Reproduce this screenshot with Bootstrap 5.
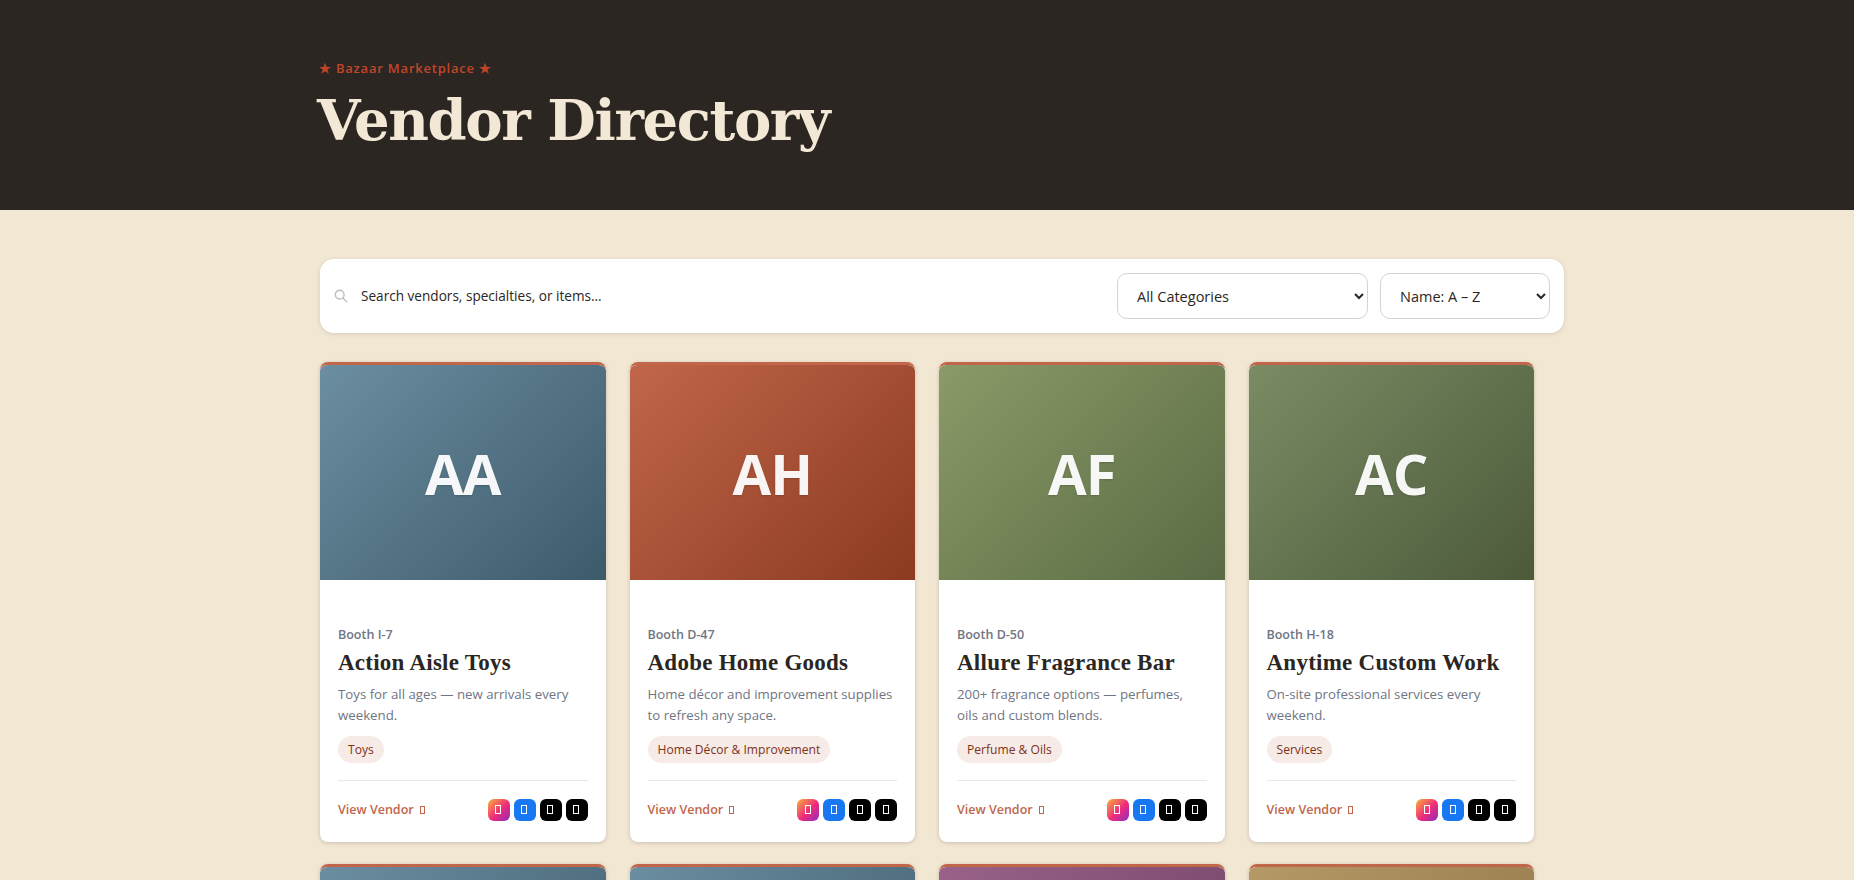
<!DOCTYPE html>
<html lang="en">
<head>
<meta charset="utf-8">
<title>Vendor Directory</title>
<link href="https://cdn.jsdelivr.net/npm/bootstrap@5.3.0/dist/css/bootstrap.min.css" rel="stylesheet">
<style>
body{background:#f1e7d3;font-family:"Open Sans","Noto Sans",sans-serif;color:#2c2622;overflow-x:hidden}
.hero-band{background:#2c2622;height:210px;padding:58px 0 0 319px}
.hero-kicker{color:#c1452b;font-size:13px;font-weight:600;letter-spacing:.78px;line-height:20px;margin-bottom:8px}
.hero-title{font-family:"DejaVu Serif",serif;font-weight:700;font-size:56px;letter-spacing:-1.4px;line-height:68px;color:#f2e8d5;margin:0 0 0 -2px}
.page-wrap{width:1214px;margin:0 auto;padding-top:49px}
.search-panel{width:1244px;height:74px;background:#fff;border-radius:14px;box-shadow:0 1px 4px rgba(44,38,34,.14);padding:0 14px;margin-bottom:29px}
.search-glass{width:14px;height:14px;flex:none}
.search-text{font-size:13.6px;color:#2c2622;margin-left:13px}
.search-select{height:46px;border-radius:10px;border-color:#d3d3dc;font-size:14.5px;color:#2c2622;padding-left:15px;appearance:auto;-webkit-appearance:auto;background-image:none}
.select-cat{width:251px}
.select-sort{width:170px}
.vendor-grid{display:grid;grid-template-columns:repeat(4,1fr);column-gap:24px;row-gap:22px}
.vendor-card{background:#fff;border-top:3px solid #c1664a;border-radius:8px;box-shadow:0 1px 4px rgba(44,38,34,.2);overflow:hidden;height:480px}
.vendor-thumb{height:215px;display:flex;align-items:center;justify-content:center;font-size:56px;font-weight:700;color:rgba(255,255,255,.95);text-shadow:0 1px 2px rgba(0,0,0,.15);border-radius:6px 6px 0 0;letter-spacing:-1px}
.tone-blue{background:linear-gradient(135deg,#6b8ea0,#3d5a6b)}
.tone-rust{background:linear-gradient(135deg,#c1664a,#8b3a20)}
.tone-sage{background:linear-gradient(135deg,#8a9a68,#5a6b44)}
.tone-moss{background:linear-gradient(135deg,#7a8c64,#4c5a3a)}
.tone-plum{background:linear-gradient(135deg,#9a6288,#6d3f60)}
.tone-sand{background:linear-gradient(135deg,#b59966,#8f7245)}
.vendor-body{padding:47px 18px 0}
.booth-label{font-size:12.5px;font-weight:600;color:#6f7583;line-height:16px}
.vendor-name{font-family:"Liberation Serif",serif;font-weight:700;font-size:23px;letter-spacing:.25px;line-height:28px;margin:6px 0 7px;color:#2c2622}
.vendor-desc{font-size:13.25px;line-height:21px;color:#6f7583;margin:0 0 10px;height:42px}
.vendor-tag{display:inline-block;background:#f6ebe7;color:#7d3218;font-size:12.1px;font-weight:500;line-height:27px;padding:0 10px;border-radius:14px}
.vendor-foot{border-top:1px solid #e7e7ec;margin-top:17px;padding-top:18px}
.view-link{color:#c1664a;font-size:12.5px;font-weight:600;text-decoration:none}
.tofu-mark{display:inline-block;width:5px;height:8px;border:1px solid currentColor;margin-left:3px}
.social-tile{width:22px;height:22px;border-radius:6px;color:#fff;display:flex;align-items:center;justify-content:center}
.social-tile .tofu-mark{margin:0 1px 2px 0;width:6px;height:9px}
.tile-ig{background:linear-gradient(135deg,#f8b13a,#ee2a7b 55%,#8a2dc2)}
.tile-fb{background:#1877f2}
.tile-dark{background:#000}
</style>
</head>
<body>
<header class="hero-band">
  <div class="hero-kicker">★ Bazaar Marketplace ★</div>
  <h1 class="hero-title">Vendor Directory</h1>
</header>
<main class="page-wrap">
  <div class="search-panel d-flex align-items-center">
    <svg class="search-glass" viewBox="0 0 16 16" fill="none" stroke="#bdbdbd" stroke-width="1.6"><circle cx="6.5" cy="6.5" r="5"/><path d="M10.2 10.2 15 15"/></svg>
    <span class="search-text flex-grow-1">Search vendors, specialties, or items...</span>
    <select class="form-select search-select select-cat me-2"><option>All Categories</option></select>
    <select class="form-select search-select select-sort ms-1"><option>Name: A – Z</option></select>
  </div>
  <div class="vendor-grid">
    <article class="vendor-card">
      <div class="vendor-thumb tone-blue">AA</div>
      <div class="vendor-body">
        <div class="booth-label">Booth I-7</div>
        <h2 class="vendor-name">Action Aisle Toys</h2>
        <p class="vendor-desc">Toys for all ages — new arrivals every weekend.</p>
        <span class="vendor-tag">Toys</span>
        <div class="vendor-foot d-flex justify-content-between align-items-center">
          <a class="view-link" href="#">View Vendor <span class="tofu-mark"></span></a>
          <div class="d-flex gap-1"><span class="social-tile tile-ig"><span class="tofu-mark"></span></span><span class="social-tile tile-fb"><span class="tofu-mark"></span></span><span class="social-tile tile-dark"><span class="tofu-mark"></span></span><span class="social-tile tile-dark"><span class="tofu-mark"></span></span></div>
        </div>
      </div>
    </article>
    <article class="vendor-card">
      <div class="vendor-thumb tone-rust">AH</div>
      <div class="vendor-body">
        <div class="booth-label">Booth D-47</div>
        <h2 class="vendor-name">Adobe Home Goods</h2>
        <p class="vendor-desc">Home décor and improvement supplies to refresh any space.</p>
        <span class="vendor-tag">Home Décor &amp; Improvement</span>
        <div class="vendor-foot d-flex justify-content-between align-items-center">
          <a class="view-link" href="#">View Vendor <span class="tofu-mark"></span></a>
          <div class="d-flex gap-1"><span class="social-tile tile-ig"><span class="tofu-mark"></span></span><span class="social-tile tile-fb"><span class="tofu-mark"></span></span><span class="social-tile tile-dark"><span class="tofu-mark"></span></span><span class="social-tile tile-dark"><span class="tofu-mark"></span></span></div>
        </div>
      </div>
    </article>
    <article class="vendor-card">
      <div class="vendor-thumb tone-sage">AF</div>
      <div class="vendor-body">
        <div class="booth-label">Booth D-50</div>
        <h2 class="vendor-name">Allure Fragrance Bar</h2>
        <p class="vendor-desc">200+ fragrance options — perfumes, oils and custom blends.</p>
        <span class="vendor-tag">Perfume &amp; Oils</span>
        <div class="vendor-foot d-flex justify-content-between align-items-center">
          <a class="view-link" href="#">View Vendor <span class="tofu-mark"></span></a>
          <div class="d-flex gap-1"><span class="social-tile tile-ig"><span class="tofu-mark"></span></span><span class="social-tile tile-fb"><span class="tofu-mark"></span></span><span class="social-tile tile-dark"><span class="tofu-mark"></span></span><span class="social-tile tile-dark"><span class="tofu-mark"></span></span></div>
        </div>
      </div>
    </article>
    <article class="vendor-card">
      <div class="vendor-thumb tone-moss">AC</div>
      <div class="vendor-body">
        <div class="booth-label">Booth H-18</div>
        <h2 class="vendor-name">Anytime Custom Work</h2>
        <p class="vendor-desc">On-site professional services every weekend.</p>
        <span class="vendor-tag">Services</span>
        <div class="vendor-foot d-flex justify-content-between align-items-center">
          <a class="view-link" href="#">View Vendor <span class="tofu-mark"></span></a>
          <div class="d-flex gap-1"><span class="social-tile tile-ig"><span class="tofu-mark"></span></span><span class="social-tile tile-fb"><span class="tofu-mark"></span></span><span class="social-tile tile-dark"><span class="tofu-mark"></span></span><span class="social-tile tile-dark"><span class="tofu-mark"></span></span></div>
        </div>
      </div>
    </article>
    <article class="vendor-card"><div class="vendor-thumb tone-blue"></div></article>
    <article class="vendor-card"><div class="vendor-thumb tone-blue"></div></article>
    <article class="vendor-card"><div class="vendor-thumb tone-plum"></div></article>
    <article class="vendor-card"><div class="vendor-thumb tone-sand"></div></article>
  </div>
</main>
<script src="https://cdn.jsdelivr.net/npm/bootstrap@5.3.0/dist/js/bootstrap.bundle.min.js"></script>
</body>
</html>
